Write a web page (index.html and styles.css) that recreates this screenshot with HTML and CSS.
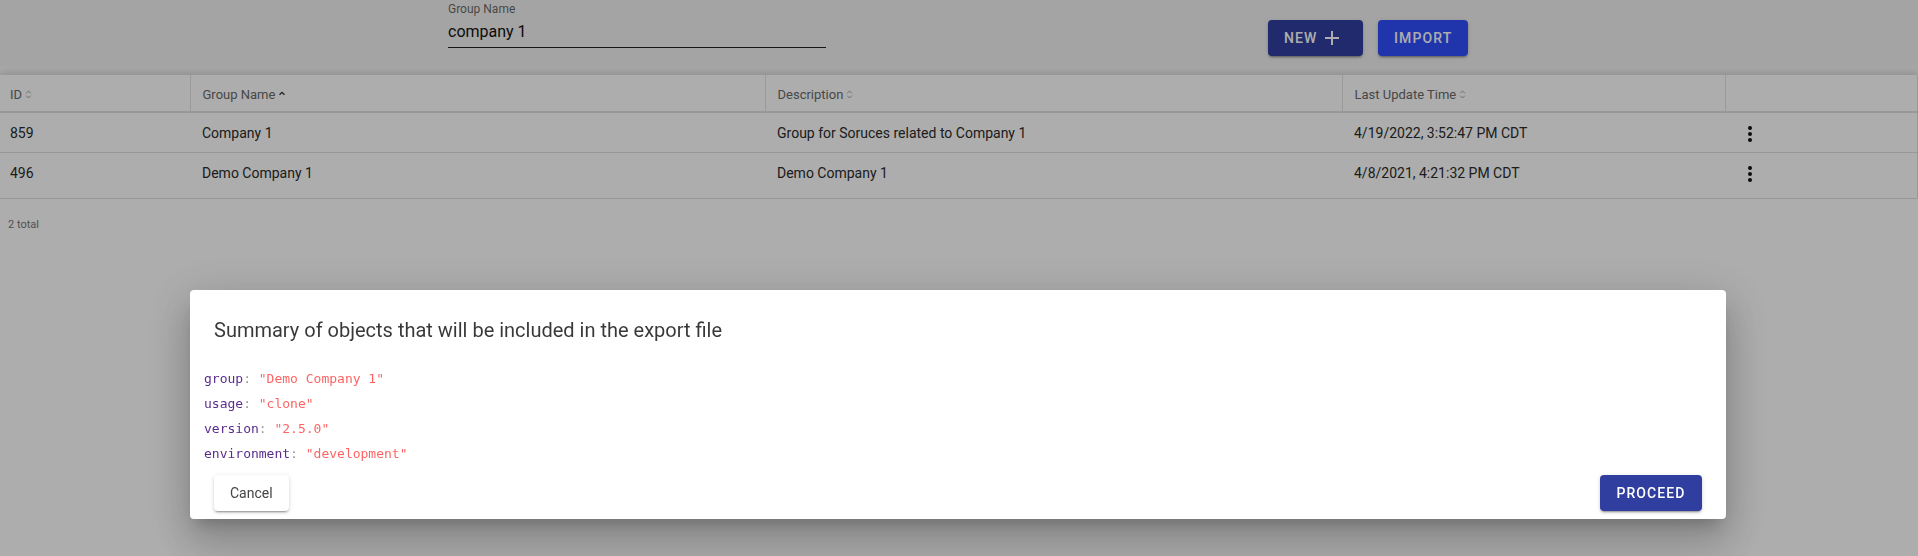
FILE: index.html
```html
<!DOCTYPE html>
<html>
<head>
<meta charset="utf-8">
<title>Groups</title>
<link rel="stylesheet" href="styles.css">
</head>
<body>
<div class="page">
  <header class="topbar">
    <div class="field">
      <label class="field-label">Group Name</label>
      <div class="field-input">company 1</div>
    </div>
    <div class="actions">
      <button class="btn btn-new">NEW
        <svg class="plus" viewBox="0 0 24 24" width="24" height="24"><path d="M19 13h-6v6h-2v-6H5v-2h6V5h2v6h6v2z" fill="currentColor"/></svg>
      </button>
      <button class="btn btn-import">IMPORT</button>
    </div>
  </header>

  <div class="table-wrap">
    <table class="grid">
      <colgroup>
        <col class="c-id"><col class="c-name"><col class="c-desc"><col class="c-time"><col class="c-act">
      </colgroup>
      <thead>
        <tr>
          <th class="first">ID<svg class="sort" viewBox="0 0 7 11" width="7" height="11"><path d="M1.2 4.3 L3.5 2 L5.8 4.3 M1.2 6.7 L3.5 9 L5.8 6.7" fill="none" stroke="#a0a0a0" stroke-width="1"/></svg></th>
          <th>Group Name<svg class="sort" viewBox="0 0 8 11" width="8" height="11"><path d="M1.5 5.8 L4 3.3 L6.5 5.8" fill="none" stroke="#333" stroke-width="1.3"/></svg></th>
          <th>Description<svg class="sort" viewBox="0 0 7 11" width="7" height="11"><path d="M1.2 4.3 L3.5 2 L5.8 4.3 M1.2 6.7 L3.5 9 L5.8 6.7" fill="none" stroke="#a0a0a0" stroke-width="1"/></svg></th>
          <th>Last Update Time<svg class="sort" viewBox="0 0 7 11" width="7" height="11"><path d="M1.2 4.3 L3.5 2 L5.8 4.3 M1.2 6.7 L3.5 9 L5.8 6.7" fill="none" stroke="#a0a0a0" stroke-width="1"/></svg></th>
          <th class="last"></th>
        </tr>
      </thead>
      <tbody>
        <tr>
          <td class="first">859</td>
          <td>Company 1</td>
          <td>Group for Soruces related to Company 1</td>
          <td>4/19/2022, 3:52:47 PM CDT</td>
          <td class="act"><svg class="kebab" viewBox="0 0 24 24" width="24" height="24"><circle cx="12" cy="6" r="2"/><circle cx="12" cy="12" r="2"/><circle cx="12" cy="18" r="2"/></svg></td>
        </tr>
        <tr class="tall">
          <td class="first">496</td>
          <td>Demo Company 1</td>
          <td>Demo Company 1</td>
          <td>4/8/2021, 4:21:32 PM CDT</td>
          <td class="act"><svg class="kebab" viewBox="0 0 24 24" width="24" height="24"><circle cx="12" cy="6" r="2"/><circle cx="12" cy="12" r="2"/><circle cx="12" cy="18" r="2"/></svg></td>
        </tr>
      </tbody>
    </table>
    <div class="total">2 total</div>
  </div>
</div>

<div class="backdrop">
  <div class="dialog">
    <h2 class="dialog-title">Summary of objects that will be included in the export file</h2>
    <div class="code">
      <div class="line"><span class="k">group</span><span class="p">: </span><span class="s">"Demo Company 1"</span></div>
      <div class="line"><span class="k">usage</span><span class="p">: </span><span class="s">"clone"</span></div>
      <div class="line"><span class="k">version</span><span class="p">: </span><span class="s">"2.5.0"</span></div>
      <div class="line"><span class="k">environment</span><span class="p">: </span><span class="s">"development"</span></div>
    </div>
    <div class="dialog-actions">
      <button class="btn btn-cancel">Cancel</button>
      <button class="btn btn-proceed">PROCEED</button>
    </div>
  </div>
</div>
</body>
</html>
```
FILE: styles.css
```css
* { box-sizing: border-box; }

html, body {
  margin: 0;
  padding: 0;
  height: 100%;
}

body {
  font-family: Roboto, "Liberation Sans", Arial, sans-serif;
  background: #f7f7f7;
  color: rgba(0, 0, 0, 0.87);
  overflow: hidden;
}

.page {
  min-height: 100%;
}

.topbar {
  display: flex;
  align-items: flex-start;
  height: 66px;
  padding: 2px 0 0 448px;
  background: #f2f2f2;
}

.field {
  width: 378px;
}

.field-label {
  display: block;
  font-size: 12px;
  line-height: 15px;
  color: rgba(0, 0, 0, 0.6);
}

.field-input {
  font-size: 16px;
  line-height: 19px;
  padding: 5px 0 6px;
  border-bottom: 1px solid #222;
  color: #111;
}

.actions {
  display: flex;
  gap: 15px;
  margin: 18px 0 0 442px;
}

.btn {
  font-family: Roboto, "Liberation Sans", Arial, sans-serif;
  font-size: 14px;
  font-weight: 500;
  letter-spacing: 1.1px;
  height: 36px;
  padding: 0 16px;
  border: none;
  border-radius: 4px;
  display: inline-flex;
  align-items: center;
  cursor: pointer;
  box-shadow: 0 3px 1px -2px rgba(0,0,0,.2), 0 2px 2px 0 rgba(0,0,0,.14), 0 1px 5px 0 rgba(0,0,0,.12);
}

.btn-new {
  background: #303f9f;
  color: #fff;
  width: 95px;
}

.btn-new .plus {
  margin-left: 3px;
}

.btn-import {
  background: #304ffe;
  color: #fff;
  width: 90px;
}

.table-wrap {
  margin-top: 9px;
  background: #fff;
  box-shadow: 0 -3px 7px rgba(0, 0, 0, 0.13);
  min-height: 490px;
}

.grid {
  width: 100%;
  border-collapse: collapse;
  table-layout: fixed;
  font-size: 14px;
  border-right: 1px solid #e0e0e0;
}

.c-id { width: 190px; }
.c-name { width: 575px; }
.c-desc { width: 577px; }
.c-time { width: 383px; }

.grid th {
  height: 37px;
  padding: 11px 12px 0;
  vertical-align: top;
  text-align: left;
  font-size: 13px;
  font-weight: 400;
  line-height: 18px;
  color: #6a6a6a;
  border-right: 1px solid #e4e4e4;
  border-bottom: 2px solid #e0e0e0;
  white-space: nowrap;
}

.grid th.last { border-right: none; }

.grid .first { padding-left: 10px; }

.sort {
  margin-left: 3px;
  vertical-align: -1px;
}

.grid td {
  height: 40px;
  padding: 11px 12px 0;
  vertical-align: top;
  line-height: 18px;
  color: #2b2b2b;
  border-bottom: 1px solid #e0e0e0;
}

.grid tr.tall td { height: 46px; }

.grid td.act {
  padding: 9px 13px 0;
}

.kebab {
  display: block;
  fill: #111;
}

.total {
  padding: 19px 8px;
  font-size: 11px;
  color: #777;
}

.backdrop {
  position: fixed;
  inset: 0;
  background: rgba(0, 0, 0, 0.32);
  display: flex;
  align-items: flex-start;
  padding: 290px 0 0 190px;
}

.dialog {
  width: 1536px;
  background: #fff;
  border-radius: 4px;
  box-shadow: 0 11px 15px -7px rgba(0,0,0,.2), 0 24px 38px 3px rgba(0,0,0,.14), 0 9px 46px 8px rgba(0,0,0,.12);
}

.dialog-title {
  margin: 0;
  padding: 24px 24px 0;
  font-size: 20px;
  line-height: 32px;
  font-weight: 400;
  color: rgba(0, 0, 0, 0.78);
}

.code {
  padding: 20px 14px 0;
  font-family: "DejaVu Sans Mono", "Liberation Mono", monospace;
  font-size: 13px;
  line-height: 25px;
}

.k { color: #5b2c8f; }
.p { color: #999; }
.s { color: #ff6464; }

.dialog-actions {
  display: flex;
  justify-content: space-between;
  padding: 9px 24px 8px;
}

.btn-cancel {
  background: #fff;
  color: #444;
  font-weight: 400;
  letter-spacing: 0;
}

.btn-proceed {
  background: #303f9f;
  color: #fff;
  width: 102px;
  justify-content: center;
}
```
